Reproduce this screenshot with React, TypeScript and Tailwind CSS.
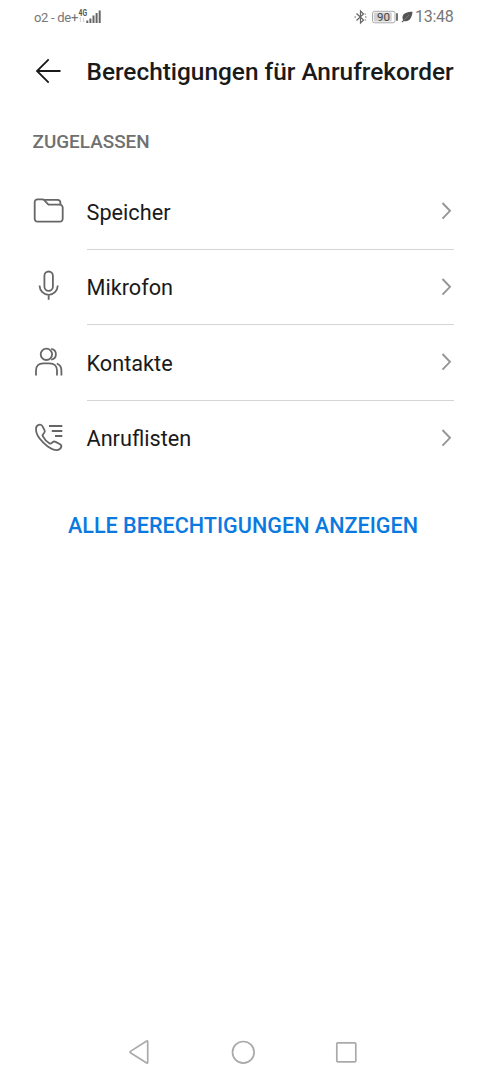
import type { ReactNode } from "react";

const FolderIcon = () => (
  <svg className="h-8 w-8" viewBox="0 0 32 32" fill="none" stroke="#666" strokeWidth="1.8" strokeLinejoin="round">
    <path d="M2.7 7.2a2.8 2.8 0 0 1 2.8-2.8h4.8c.9 0 1.6.3 2.2.9l3.2 3.5c.5.6 1.2.9 2 .9h10.2a2.8 2.8 0 0 1 2.8 2.8v11.3a2.8 2.8 0 0 1-2.8 2.8H5.5a2.8 2.8 0 0 1-2.8-2.8z" />
    <path d="M12 4.9h13.5a2.9 2.9 0 0 1 2.9 2.9v2.3" />
  </svg>
);

const MicIcon = () => (
  <svg className="h-8 w-8" viewBox="0 0 32 32" fill="none" stroke="#666" strokeWidth="1.8">
    <rect x="12.4" y="1.5" width="8.5" height="19.3" rx="4.25" />
    <path d="M7.5 15.5c.3 5.5 4.2 9.3 9.15 9.3s8.85-3.8 9.15-9.3M16.65 24.8v5" />
  </svg>
);

const ContactsIcon = () => (
  <svg className="h-8 w-8" viewBox="0 0 32 32" fill="none" stroke="#666" strokeWidth="1.8">
    <circle cx="14.4" cy="8.3" r="5.7" />
    <path d="M19.2 2.9c2.9.5 4.7 2.7 4.7 5.4s-1.8 4.9-4.7 5.4" />
    <path d="M4 29.5v-5c0-4.4 2.8-7.2 7.2-7.2h6.4c4.4 0 7.4 2.8 7.4 7.2v5" />
    <path d="M24.8 17.5c2.9 1 4.6 3.5 4.6 7v5" />
  </svg>
);

const CallLogIcon = () => (
  <svg className="h-8 w-8" viewBox="0 0 32 32" fill="none" stroke="#666" strokeWidth="1.8" strokeLinejoin="round">
    <path d="M17 4h13.3M19.8 9h10.5M23 14h7.3" />
    <path d="M4 6.3C4.3 4.4 5.8 2.9 7.8 2.7c1.4-.1 2.3.7 2.9 2l1.9 3.7c.5 1.2.2 2-.7 2.8-1.3 1.1-1.7 1.8-1 3.2 1.5 2.9 3.7 5.2 6.4 6.9 1 .7 1.7.5 2.5-.4 1.2-1.5 2.2-1.8 3.8-1l4 2.1c1.5.8 2.1 1.8 1.6 3.1-.7 1.8-2.4 2.9-4.6 3C17.5 28.2 3.2 15.5 4 6.3z" />
  </svg>
);

const ChevronIcon = () => (
  <svg className="mr-px h-5 w-3 shrink-0" viewBox="0 0 12 20" fill="none" stroke="#959595" strokeWidth="1.9">
    <path d="M1.5 2 9 9.8l-7.5 7.8" />
  </svg>
);

const StatusBar = () => (
  <div className="flex h-[34px] items-center justify-between pl-[34px] pr-[33px] text-[#777]">
    <div className="flex items-center">
      <span className="w-[43px] whitespace-nowrap pt-px text-[13px] tracking-[-0.3px]">o2 - de+</span>
      <svg className="h-[18px] w-[26px]" viewBox="0 0 26 18">
        <text x="1.5" y="8" fontSize="9" fontWeight="700" fill="#555" textLength="8.5" lengthAdjust="spacingAndGlyphs">4G</text>
        <path d="M3.5 14V9.5m-1.2 1.2 1.2-1.2M6.5 9.5V14m1.2-1.2L6.5 14" stroke="#ccc" strokeWidth=".8" fill="none" />
        <path d="M9.3 12.5h2V15h-2zM12.4 10.5h2V15h-2zM15.5 7.5h2V15h-2zM18.6 5h2v10h-2zM21.7 2.5h2V15h-2z" fill="#666" />
      </svg>
    </div>
    <div className="flex items-center">
      <svg className="h-4 w-[14px]" viewBox="0 0 14 16" fill="none" stroke="#666" strokeWidth="1.2">
        <path d="m3.5 4.5 7 6.5-3 3V2l3 3-7 6.5" />
        <path d="M1.5 8H3M12 8h1.5M11.8 5.3l.8-.4M11.8 10.7l.8.4" />
      </svg>
      <svg className="ml-[4px] h-4 w-[27px]" viewBox="0 0 27 16">
        <rect x="1.5" y="2.3" width="22.5" height="11.5" rx="2" fill="#fff" stroke="#aaa" />
        <rect x="2.8" y="3.6" width="18" height="9" rx="1" fill="#d2d2d2" />
        <text x="6" y="12" fontSize="11" fill="#444" textLength="13" lengthAdjust="spacingAndGlyphs">90</text>
        <path d="M26 4.2v7.5" stroke="#444" strokeWidth="1.5" />
      </svg>
      <svg className="ml-[3px] h-3 w-3" viewBox="0 0 12 12">
        <path d="M11.5.8C6.5.8 1.5 2 1.5 6.8c0 1 .3 1.7.7 2.3L.6 11l.7.6L3 9.9c5 1.3 8-2.6 8.500-9.1z" fill="#555" />
        <path d="M3 9.2 8.2 4" stroke="#999" strokeWidth=".6" />
      </svg>
      <span className="ml-[2px] w-[39px] whitespace-nowrap text-[16px] tracking-[-0.3px]">13:48</span>
    </div>
  </div>
);

const permissions: { label: string; icon: ReactNode }[] = [
  { label: "Speicher", icon: <FolderIcon /> },
  { label: "Mikrofon", icon: <MicIcon /> },
  { label: "Kontakte", icon: <ContactsIcon /> },
  { label: "Anruflisten", icon: <CallLogIcon /> },
];

const App = () => {
  return (
    <div className="flex h-[1080px] w-[487px] flex-col overflow-hidden bg-white font-[Roboto,sans-serif]">
      <StatusBar />

      <header className="flex h-[76px] items-center pl-[32px]">
        <button className="w-[54.5px]">
          <svg className="h-8 w-8" viewBox="0 0 32 32" fill="none" stroke="#1a1a1a" strokeWidth="1.8">
            <path d="M28.5 15H5M16.7 3.3 5 15l11.7 11.7" />
          </svg>
        </button>
        <h1 className="whitespace-nowrap pt-px text-[24.4px] font-medium text-[#1a1a1a]">Berechtigungen für Anrufrekorder</h1>
      </header>

      <h2 className="flex h-[64px] items-center pl-[32.5px] pt-px text-[18.9px] font-medium text-[#707070]">ZUGELASSEN</h2>

      {/* Permission list */}
      <ul>
        {permissions.map((item, index) => (
          <li key={item.label} className="flex h-[75.6px] pl-[32px] pr-[33px]">
            <div className="flex w-[54.5px] shrink-0 items-center pb-[2px]">{item.icon}</div>
            <div className={`flex flex-1 items-center justify-between ${index < permissions.length - 1 ? "border-b border-[#d4d4d4]" : "pb-px"}`}>
              <span className="pt-[3px] text-[21.7px] text-[#1a1a1a]">{item.label}</span>
              <ChevronIcon />
            </div>
          </li>
        ))}
      </ul>

      <button className="mt-[24px] h-[51px] whitespace-nowrap pr-px text-center text-[21.6px] font-medium text-[#0a7ae0]">
        ALLE BERECHTIGUNGEN ANZEIGEN
      </button>

      {/* System navigation */}
      <nav className="mt-auto flex h-[56px] items-center justify-between pl-[127px] pr-[128px]">
        <svg className="h-6 w-6" viewBox="0 0 24 24" fill="none" stroke="#aaa" strokeWidth="1.7" strokeLinejoin="round">
          <path d="M20.7 1.5v21c0 .6-.5.8-1 .5L3.4 12.7c-.5-.3-.5-1 0-1.3L19.7 1c.5-.3 1-.1 1 .5z" />
        </svg>
        <svg className="h-6 w-6" viewBox="0 0 24 24" fill="none" stroke="#aaa" strokeWidth="1.7">
          <circle cx="12.3" cy="12.3" r="10.8" />
        </svg>
        <svg className="h-6 w-6" viewBox="0 0 24 24" fill="none" stroke="#aaa" strokeWidth="1.7">
          <rect x="1.8" y="2.8" width="19" height="19" rx="1" />
        </svg>
      </nav>
    </div>
  );
};

export default App;
